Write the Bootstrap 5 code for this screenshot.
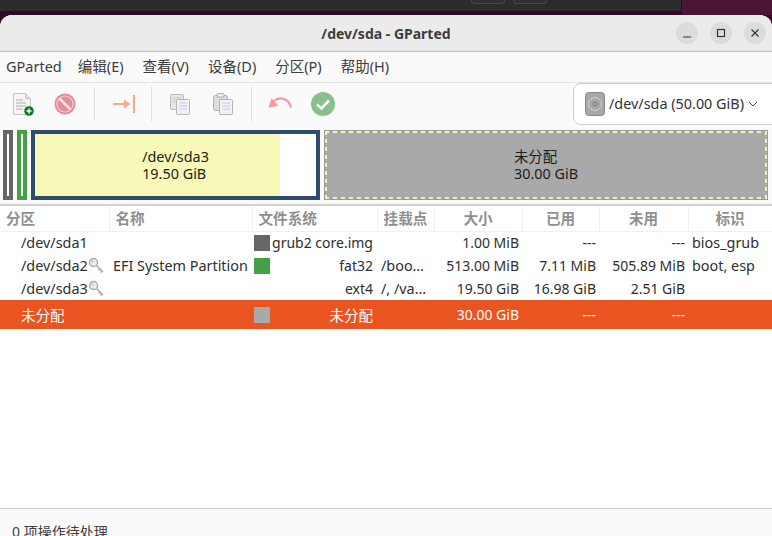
<!DOCTYPE html>
<html lang="zh">
<head>
    <meta charset="UTF-8">
    <title>/dev/sda - GParted</title>
    <link href="https://cdn.jsdelivr.net/npm/bootstrap@5.3.3/dist/css/bootstrap.min.css" rel="stylesheet">
    <style>
        html, body { height: 536px; overflow: hidden; }
        body {
            background: #300a24;
            font-family: "Noto Sans", "Noto Sans CJK SC", sans-serif;
            font-size: 14.4px;
            color: #2e2e2e;
        }
        .desk-strip { height: 15px; }
        .desk-left { width: 682px; height: 11px; background: #2c2c2c; border-right: 1px solid #151515; padding-right: 134px; }
        .desk-right { background: #4a1535; }
        .desk-btn { width: 34px; height: 4px; border: 1px solid #4a4a4a; border-top: 0; border-radius: 0 0 5px 5px; background: #303030; }
        .gp-window { height: 521px; background: #fff; border-radius: 12px 12px 0 0; overflow: hidden; }
        .gp-title { height: 37px; background: #ebebeb; border-bottom: 1px solid #c0bfbc; }
        .gp-title-text { font-weight: 700; font-size: 14px; color: #3d3d3d; padding-top: 1px; }
        .gp-winbtns { right: 6px; top: 7px; gap: 12px; }
        .gp-winbtn { width: 22px; height: 22px; border-radius: 50%; background: #dcdcdc; }
        .gp-menu { height: 31px; background: #fafafa; border-bottom: 1px solid #e2e2e2; padding-left: 6px; gap: 19px; font-size: 14.5px; color: #3d3d3d; }
        .gp-menu-app { margin-right: -3px; }
        .gp-tools { height: 45px; background: #fafafa; padding: 0 0 3px 11px; }
        .gp-tool { width: 24px; height: 24px; }
        .gp-sep { width: 1px; height: 34px; background: #dedede; }
        .gp-device { width: 200px; height: 42px; margin-left: auto; margin-right: -1px; background: #fff; border: 1px solid #cfcfcf; border-radius: 8px 0 0 8px; padding-left: 11px; font-size: 14.4px; color: #333; }
        .gp-map { height: 78px; background: #fafafa; border-bottom: 2px solid #cfcfcf; padding: 2px 4px 4px 3px; gap: 4px; }
        .gp-part { height: 70px; line-height: 17px; color: #1c1c1c; font-size: 14.4px; }
        .gp-p1 { width: 10px; border: 4px solid #666; background: #fff; }
        .gp-p2 { width: 10px; border: 4px solid #43a047; background: #fff; }
        .gp-p3 { width: 289px; border: 4px solid #2f4b6e; background: linear-gradient(90deg, #f8f8b8 245px, #fff 245px); }
        .gp-p4 {
            width: 444px;
            border: 1px solid #999;
            background:
                repeating-linear-gradient(90deg, #f5f5b0 0 4px, transparent 4px 8px) left top / 100% 2px no-repeat,
                repeating-linear-gradient(90deg, #f5f5b0 0 4px, transparent 4px 8px) left bottom / 100% 2px no-repeat,
                repeating-linear-gradient(0deg, #f5f5b0 0 4px, transparent 4px 8px) left top / 2px 100% no-repeat,
                repeating-linear-gradient(0deg, #f5f5b0 0 4px, transparent 4px 8px) right top / 2px 100% no-repeat,
                #a9a9a9;
        }
        .gp-table { table-layout: fixed; width: 772px; margin: 0; border-collapse: collapse; }
        .gp-table th { height: 25px; padding: 0 4px; font-weight: 700; font-size: 14.6px; color: #8f8f8f; background: #fff; border-bottom: 1px solid #f0f0f0; border-right: 1px solid #f0f0f0; text-align: center; vertical-align: middle; line-height: 20px; }
        .gp-table th:nth-child(-n+3) { text-align: left; padding-left: 6px; }
        .gp-table td { height: 23px; padding: 0 4px; border: 0; white-space: nowrap; color: #2e2e2e; font-size: 14.4px; line-height: 20px; vertical-align: middle; }
        .gp-table tr.gp-sel td { height: 29px; background: #e95420; color: #fff; font-size: 14.5px; }
        .gp-table td.gp-end { text-align: right; font-size: 14px; padding-right: 3px; }
        .gp-table tr.gp-sel td.gp-end { font-size: 14px; }
        .gp-table td.gp-cut { padding-right: 0; }
        .gp-swatch { display: inline-block; width: 16px; height: 16px; flex: none; }
        .gp-table td.gp-name { padding-left: 21px; }
        .gp-table td.gp-label { padding-left: 4px; }
        .gp-table td.gp-fs { padding: 0 4px 0 2px; font-size: 14px; }
        .gp-empty { flex: 1; }
        .gp-status { height: 28px; background: #fafafa; border-top: 1px solid #c8c8c8; padding: 13px 0 0 12px; font-size: 14px; color: #3d3d3d; line-height: 20px; }
    </style>
</head>
<body>
    <div class="desk-strip d-flex">
        <div class="desk-left d-flex justify-content-end gap-2">
            <div class="desk-btn"></div>
            <div class="desk-btn"></div>
        </div>
        <div class="desk-right flex-grow-1"></div>
    </div>

    <div class="gp-window d-flex flex-column">
        <!-- title bar -->
        <div class="gp-title position-relative d-flex justify-content-center align-items-center">
            <span class="gp-title-text">/dev/sda - GParted</span>
            <div class="gp-winbtns position-absolute d-flex">
                <div class="gp-winbtn d-flex align-items-center justify-content-center">
                    <svg width="10" height="10" viewBox="0 0 10 10"><path d="M1 9h8" stroke="#333" stroke-width="1.2"/></svg>
                </div>
                <div class="gp-winbtn d-flex align-items-center justify-content-center">
                    <svg width="10" height="10" viewBox="0 0 10 10"><rect x="1.5" y="1.5" width="7" height="7" fill="none" stroke="#333" stroke-width="1.2"/></svg>
                </div>
                <div class="gp-winbtn d-flex align-items-center justify-content-center">
                    <svg width="10" height="10" viewBox="0 0 10 10"><path d="M1.5 1.5l7 7M8.5 1.5l-7 7" stroke="#333" stroke-width="1.2"/></svg>
                </div>
            </div>
        </div>

        <!-- menu -->
        <div class="gp-menu d-flex align-items-center">
            <span class="gp-menu-app">GParted</span><span>编辑(E)</span><span>查看(V)</span><span>设备(D)</span><span>分区(P)</span><span>帮助(H)</span>
        </div>

        <!-- toolbar -->
        <div class="gp-tools d-flex align-items-center">
            <svg class="gp-tool" viewBox="0 0 24 24" style="margin-right:18px">
                <path d="M2.5 1.5h12l5 5v16h-17z" fill="#f6f6f6" stroke="#c4c4c4"/>
                <path d="M14.5 1.5v5h5" fill="#e0e0e0" stroke="#c4c4c4"/>
                <path d="M5 8h7M5 11h10M5 14h10M5 17h7" stroke="#aaa"/>
                <circle cx="18" cy="19" r="4.8" fill="#0f7b24"/>
                <path d="M15.5 19h5M18 16.5v5" stroke="#fff" stroke-width="1.5"/>
            </svg>
            <svg class="gp-tool" viewBox="0 0 24 24" style="margin-right:17px">
                <circle cx="12" cy="12" r="10.5" fill="#e28c99"/>
                <circle cx="12" cy="12" r="8" fill="#e28c99" stroke="#f4cfd4" stroke-width="1.2"/>
                <path d="M6.5 6.5l11 11" stroke="#f7e3e5" stroke-width="2.6"/>
            </svg>
            <div class="gp-sep"></div>
            <svg class="gp-tool" viewBox="0 0 24 24" style="margin:0 15px 0 17px">
                <path d="M1 12h17" stroke="#fba78a" stroke-width="2"/>
                <path d="M12 7.5l6 4.5-6 4.5z" fill="#fba78a"/>
                <path d="M22 3v18" stroke="#fba78a" stroke-width="2"/>
            </svg>
            <div class="gp-sep"></div>
            <svg class="gp-tool" viewBox="0 0 24 24" style="margin:0 19px 0 16px">
                <rect x="2.5" y="2.5" width="13" height="15" rx="1.5" fill="#e4e4e4" stroke="#bbb"/>
                <path d="M5 6h8M5 9h8" stroke="#ccc"/>
                <rect x="8.5" y="7.5" width="13" height="15" rx="1" fill="#f1f1f4" stroke="#b5b5b5"/>
                <path d="M11 11h8M11 14h8M11 17h8" stroke="#c8c8f0"/>
            </svg>
            <svg class="gp-tool" viewBox="0 0 24 24" style="margin-right:16px">
                <rect x="2.5" y="3.5" width="14" height="15" rx="2" fill="#dcdcdc" stroke="#b0b0b0"/>
                <rect x="6" y="1.5" width="7" height="3.5" rx="1" fill="#f2f2f2" stroke="#aaa"/>
                <rect x="8.5" y="7.5" width="13" height="15" rx="1" fill="#f1f1f4" stroke="#b5b5b5"/>
                <path d="M11 11h8M11 14h8M11 17h8" stroke="#c8c8f0"/>
            </svg>
            <div class="gp-sep"></div>
            <svg class="gp-tool" viewBox="0 0 24 24" style="margin:0 19px 0 16px">
                <path d="M6 9C11 4 21 6 23 15.7" fill="none" stroke="#f59aa4" stroke-width="2.2"/>
                <path d="M.3 15.7L3.7 6.3l6.6 7.4z" fill="#f59aa4"/>
            </svg>
            <svg class="gp-tool" viewBox="0 0 24 24">
                <circle cx="12" cy="12" r="12" fill="#87c08d"/>
                <path d="M6 12.5l4.5 4L18 8.5" fill="none" stroke="#fff" stroke-width="2.6"/>
            </svg>
            <div class="gp-device d-flex align-items-center">
                <svg width="20" height="24" viewBox="0 0 20 24" class="me-1 flex-shrink-0">
                    <rect x=".5" y=".5" width="19" height="23" rx="3" fill="#a8a8a8" stroke="#8a8a8a"/>
                    <circle cx="10" cy="12" r="6.5" fill="none" stroke="#d2d2d2"/>
                    <circle cx="10" cy="12" r="2" fill="none" stroke="#777"/>
                </svg>
                <span>/dev/sda (50.00 GiB)</span>
                <svg width="10" height="6" viewBox="0 0 10 6" class="ms-1"><path d="M1 1l4 4 4-4" fill="none" stroke="#444"/></svg>
            </div>
        </div>

        <!-- partition map -->
        <div class="gp-map d-flex">
            <div class="gp-part gp-p1"></div>
            <div class="gp-part gp-p2"></div>
            <div class="gp-part gp-p3 d-flex align-items-center justify-content-center">
                <div>/dev/sda3<br>19.50 GiB</div>
            </div>
            <div class="gp-part gp-p4 d-flex align-items-center justify-content-center">
                <div>未分配<br>30.00 GiB</div>
            </div>
        </div>

        <!-- partition list -->
        <table class="table gp-table">
            <colgroup>
                <col style="width:109px"><col style="width:143px"><col style="width:125px"><col style="width:57px">
                <col style="width:88px"><col style="width:77px"><col style="width:89px"><col style="width:84px">
            </colgroup>
            <thead>
                <tr><th>分区</th><th>名称</th><th>文件系统</th><th>挂载点</th><th>大小</th><th>已用</th><th>未用</th><th>标识</th></tr>
            </thead>
            <tbody>
                <tr>
                    <td class="gp-name">/dev/sda1</td><td></td>
                    <td class="gp-fs"><div class="d-flex justify-content-between align-items-center"><span class="gp-swatch" style="background:#666"></span><span>grub2 core.img</span></div></td>
                    <td></td><td class="gp-end">1.00 MiB</td><td class="gp-end">---</td><td class="gp-end">---</td><td>bios_grub</td>
                </tr>
                <tr>
                    <td class="gp-name"><span class="d-inline-flex align-items-center">/dev/sda2<svg width="17" height="17" viewBox="0 0 17 17"><use href="#gp-key"/></svg></span></td><td class="gp-label">EFI System Partition</td>
                    <td class="gp-fs"><div class="d-flex justify-content-between align-items-center"><span class="gp-swatch" style="background:#43a047"></span><span>fat32</span></div></td>
                    <td class="gp-cut">/boo…</td><td class="gp-end">513.00 MiB</td><td class="gp-end">7.11 MiB</td><td class="gp-end">505.89 MiB</td><td>boot, esp</td>
                </tr>
                <tr>
                    <td class="gp-name"><span class="d-inline-flex align-items-center">/dev/sda3<svg width="17" height="17" viewBox="0 0 17 17"><use href="#gp-key"/></svg></span></td><td></td>
                    <td class="gp-fs"><div class="d-flex justify-content-end align-items-center"><span>ext4</span></div></td>
                    <td class="gp-cut">/, /va…</td><td class="gp-end">19.50 GiB</td><td class="gp-end">16.98 GiB</td><td class="gp-end">2.51 GiB</td><td></td>
                </tr>
                <tr class="gp-sel">
                    <td class="gp-name">未分配</td><td></td>
                    <td class="gp-fs"><div class="d-flex justify-content-between align-items-center"><span class="gp-swatch" style="background:#a9a9a9"></span><span>未分配</span></div></td>
                    <td></td><td class="gp-end">30.00 GiB</td><td class="gp-end">---</td><td class="gp-end">---</td><td></td>
                </tr>
            </tbody>
        </table>
        <div class="gp-empty"></div>

        <div class="gp-status">0 项操作待处理</div>
    </div>

    <svg width="0" height="0" class="position-absolute">
        <defs>
            <g id="gp-key">
                <circle cx="5.5" cy="5.5" r="4" fill="#eee" stroke="#aaa" stroke-width="1.3"/>
                <circle cx="4.5" cy="4.5" r="1.1" fill="#bbb"/>
                <path d="M8.5 8.5l6.5 6.5M12 12l-1.5 1.5M14 14l-1.5 1.5" stroke="#aaa" stroke-width="1.5" fill="none"/>
            </g>
        </defs>
    </svg>

    <script src="https://cdn.jsdelivr.net/npm/bootstrap@5.3.3/dist/js/bootstrap.bundle.min.js"></script>
</body>
</html>
